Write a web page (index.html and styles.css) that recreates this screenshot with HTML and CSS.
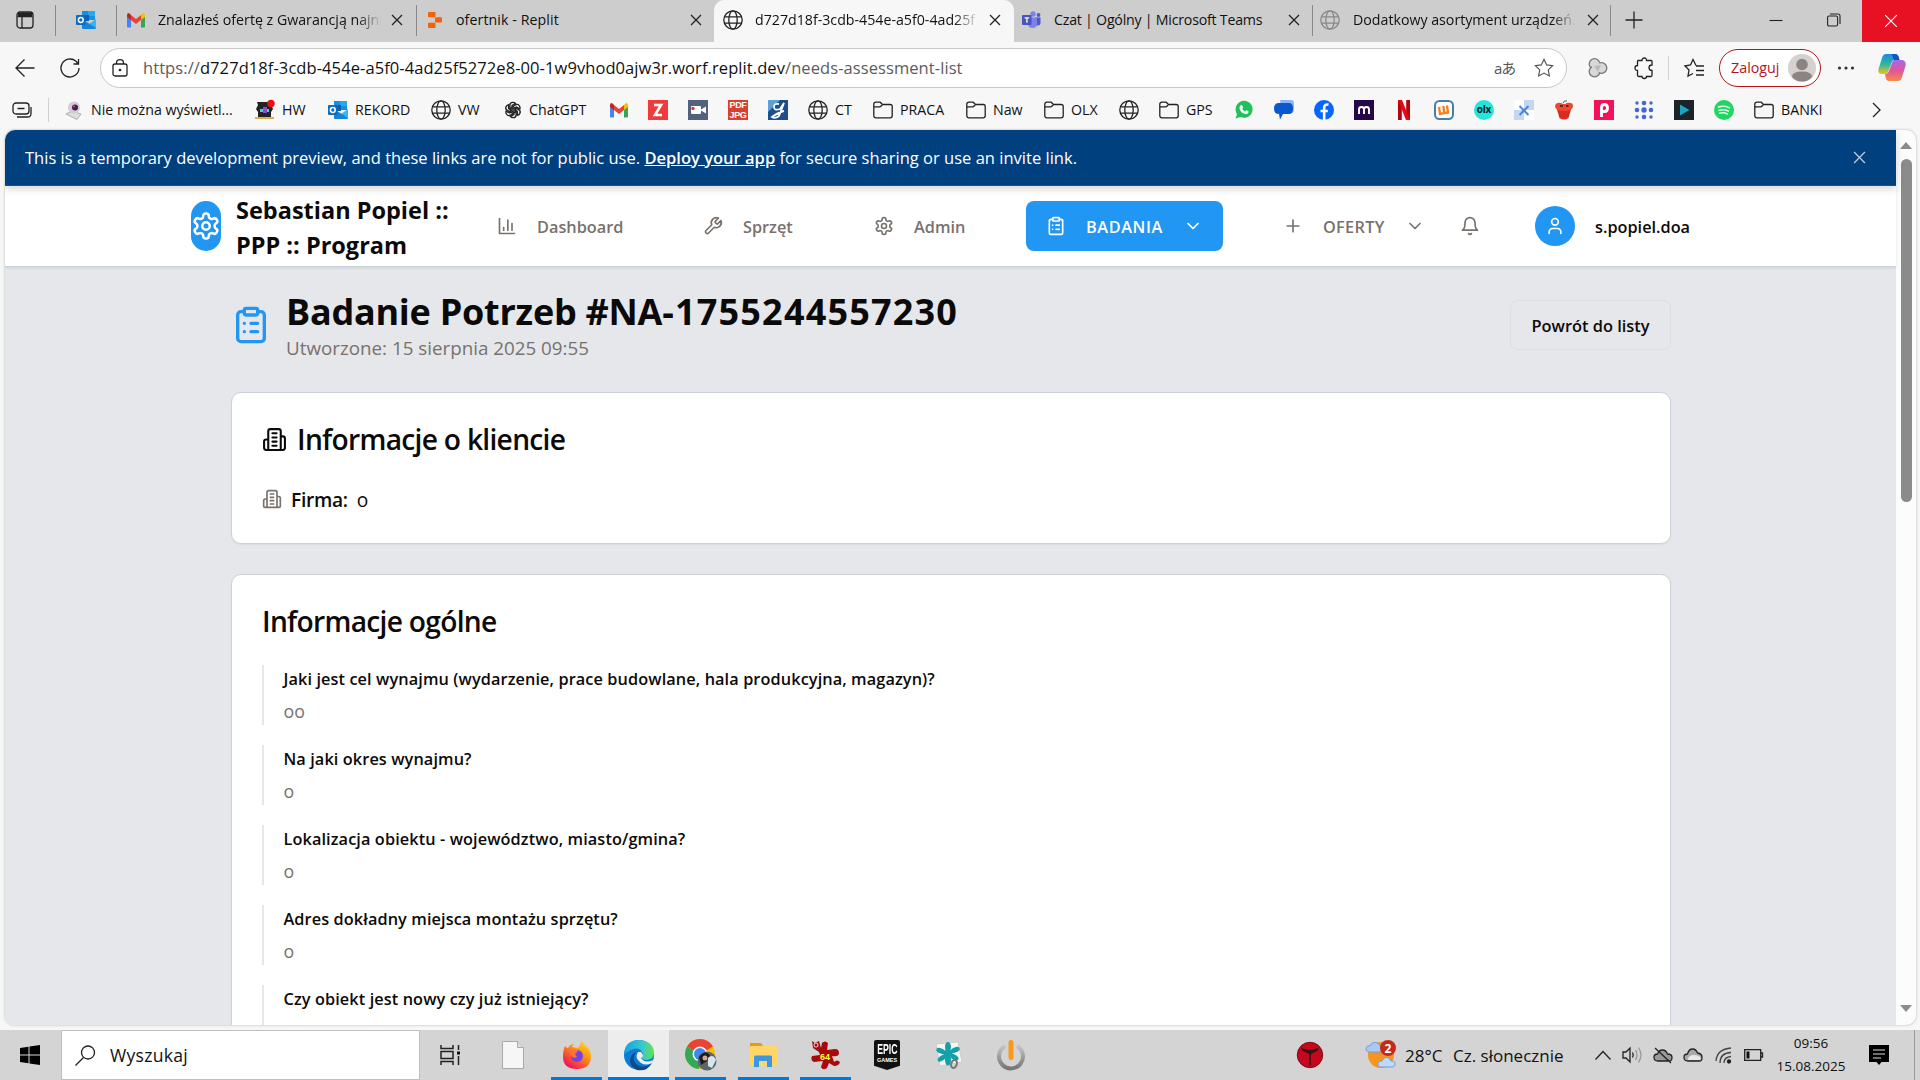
FILE: index.html
```html
<!DOCTYPE html>
<html lang="pl">
<head>
<meta charset="utf-8">
<title>Badanie Potrzeb</title>
<link rel="stylesheet" href="styles.css">
</head>
<body>
<svg class="sprite" xmlns="http://www.w3.org/2000/svg">
  <symbol id="gear" viewBox="0 0 24 24"><path d="M12.22 2h-.44a2 2 0 0 0-2 2v.18a2 2 0 0 1-1 1.73l-.43.25a2 2 0 0 1-2 0l-.15-.08a2 2 0 0 0-2.73.73l-.22.38a2 2 0 0 0 .73 2.73l.15.1a2 2 0 0 1 1 1.72v.51a2 2 0 0 1-1 1.74l-.15.09a2 2 0 0 0-.73 2.73l.22.38a2 2 0 0 0 2.73.73l.15-.08a2 2 0 0 1 2 0l.43.25a2 2 0 0 1 1 1.73V20a2 2 0 0 0 2 2h.44a2 2 0 0 0 2-2v-.18a2 2 0 0 1 1-1.73l.43-.25a2 2 0 0 1 2 0l.15.08a2 2 0 0 0 2.73-.73l.22-.39a2 2 0 0 0-.73-2.73l-.15-.08a2 2 0 0 1-1-1.74v-.5a2 2 0 0 1 1-1.74l.15-.09a2 2 0 0 0 .73-2.73l-.22-.38a2 2 0 0 0-2.73-.73l-.15.08a2 2 0 0 1-2 0l-.43-.25a2 2 0 0 1-1-1.73V4a2 2 0 0 0-2-2z"/><circle cx="12" cy="12" r="3"/></symbol>
  <symbol id="clipboard" viewBox="0 0 24 24"><rect x="8" y="2" width="8" height="4" rx="1"/><path d="M16 4h2a2 2 0 0 1 2 2v14a2 2 0 0 1-2 2H6a2 2 0 0 1-2-2V6a2 2 0 0 1 2-2h2M12 11h4M12 16h4M8 11h.01M8 16h.01"/></symbol>
  <symbol id="building" viewBox="0 0 24 24"><path d="M6 22V4a2 2 0 0 1 2-2h8a2 2 0 0 1 2 2v18ZM6 12H4a2 2 0 0 0-2 2v6a2 2 0 0 0 2 2h2M18 9h2a2 2 0 0 1 2 2v9a2 2 0 0 1-2 2h-2M10 6h4M10 10h4M10 14h4M10 18h4"/></symbol>
  <symbol id="chevron" viewBox="0 0 24 24"><path d="m6 9 6 6 6-6"/></symbol>
  <symbol id="globe" viewBox="0 0 20 20"><circle cx="10" cy="10" r="9.2"/><ellipse cx="10" cy="10" rx="4.2" ry="9.2"/><path d="M1.5 6.8h17M1.5 13.2h17"/></symbol>
  <symbol id="folder" viewBox="0 0 20 20"><path d="M.8 4.2a2 2 0 0 1 2-2h4.4l2.3 2.3h7.7a2 2 0 0 1 2 2v9.3a2 2 0 0 1-2 2H2.8a2 2 0 0 1-2-2zM.8 6.8h5.7q1 0 1.6-.8l1.4-1.5"/></symbol>
  <symbol id="x" viewBox="0 0 12 12"><path d="m1 1 10 10M11 1 1 11"/></symbol>
  <symbol id="outlook" viewBox="0 0 20 20"><path fill="#1490df" d="M6 1h13v9H6z"/><path fill="#28a8ea" d="M12 1h7v5h-7z"/><path fill="#0a5fb4" d="M6 5h7v6H6z"/><path fill="#35b8f1" d="m20 9-7 5v5h6q1 0 1-1z"/><path fill="#1784d8" d="m6 9 14 9-1 1H7q-1 0-1-1z"/><rect y="5" width="9.5" height="10" rx="1" fill="#0f6cbd"/><circle cx="4.8" cy="10" r="2.4" fill="none" stroke="#fff" stroke-width="1.5"/></symbol>
  <symbol id="gmail" viewBox="0 0 20 16"><path fill="#4285f4" d="M1 4v10.5q0 1 1 1h3V7z"/><path fill="#34a853" d="M19 4v10.5q0 1-1 1h-3V7z"/><path fill="#ea4335" d="m5 3 5 4 5-4v5l-5 4-5-4z"/><path fill="#c5221f" d="M1 3q0-2 2-2l2 2v5L1 5z"/><path fill="#fbbc04" d="M19 3q0-2-2-2l-2 2v5l4-3z"/></symbol>
</svg>

<header class="tabs">
  <svg class="ln" width="18" height="18" viewBox="0 0 18 18"><rect x="1" y="1" width="16" height="16" rx="3"/><path d="M1.5 5.5h15M6 5v12"/><path d="M2 3.5h14" stroke-width="4"/></svg>
  <i class="sep"></i>
  <svg width="20" height="20"><use href="#outlook"/></svg>
  <i class="sep"></i>
  <svg width="20" height="16"><use href="#gmail"/></svg>
  <span class="tab-t fade">Znalazłeś ofertę z Gwarancją najni</span>
  <svg class="ln x" width="12" height="12"><use href="#x"/></svg>
  <i class="sep"></i>
  <svg width="14" height="16" viewBox="0 0 14 16"><g fill="#f26207"><rect width="7.5" height="5.3" rx="1"/><rect x="7" y="5.3" width="7" height="5.3" rx="1"/><rect y="10.7" width="7.5" height="5.3" rx="1"/></g></svg>
  <span class="tab-t">ofertnik - Replit</span>
  <svg class="ln x" width="12" height="12"><use href="#x"/></svg>
  <div class="active">
    <svg class="ln g" width="20" height="20"><use href="#globe"/></svg>
    <span class="tab-t fade">d727d18f-3cdb-454e-a5f0-4ad25f</span>
    <svg class="ln x" width="12" height="12"><use href="#x"/></svg>
  </div>
  <svg width="19" height="18" viewBox="0 0 19 18"><circle cx="11" cy="3" r="2.7" fill="#7b83eb"/><circle cx="16.5" cy="4" r="1.9" fill="#5059c9"/><path fill="#5059c9" d="M13 6.5h5.5V12q0 2.5-3 2.5H13z"/><path fill="#7b83eb" d="M6 6.5h9v6q0 4.5-4.5 4.5T6 12.5z"/><rect y="4" width="9.5" height="10" rx="1" fill="#4b53bc"/><path d="M2.6 6.8h4.6M4.9 6.8v5" stroke="#fff" stroke-width="1.3"/></svg>
  <span class="tab-t teams">Czat | Ogólny | Microsoft Teams</span>
  <svg class="ln x" width="12" height="12"><use href="#x"/></svg>
  <i class="sep"></i>
  <svg class="ln g pale" width="20" height="20"><use href="#globe"/></svg>
  <span class="tab-t fade">Dodatkowy asortyment urządzeń.</span>
  <svg class="ln x" width="12" height="12"><use href="#x"/></svg>
  <i class="sep"></i>
  <svg class="ln" width="18" height="18" viewBox="0 0 18 18"><path d="M9 .5v17M.5 9h17"/></svg>
  <svg class="ln thin" width="14" height="14" viewBox="0 0 14 14"><path d="M.5 7.5h13"/></svg>
  <svg class="ln thin" width="14" height="14" viewBox="0 0 14 14"><rect x=".6" y="3" width="10" height="10" rx="1.5"/><path d="M3 1h8q2 0 2 2v8"/></svg>
  <div class="close"><svg class="ln thin" width="14" height="14" viewBox="0 0 12 12"><use href="#x"/></svg></div>
</header>

<div class="toolbar">
  <svg class="ln" width="20" height="20" viewBox="0 0 20 20"><path d="M19.5 10H1M9.5 1.5 1 10l8.5 8.5"/></svg>
  <svg class="ln" width="20" height="20" viewBox="0 0 20 20"><path d="M19 10a9 9 0 1 1-3-6.7L18.5 6M18.5 1v5h-5"/></svg>
  <div class="url">
    <svg class="ln" width="16" height="18" viewBox="0 0 16 18"><rect x="1" y="5" width="14" height="12" rx="2"/><path d="M4.5 5V4q0-3.300 3.500-3.300T11.500 4v1"/><circle cx="8" cy="11" r=".7" fill="#333"/></svg>
    <span class="addr"><em>https://</em>d727d18f-3cdb-454e-a5f0-4ad25f5272e8-00-1w9vhod0ajw3r.worf.replit.dev<em>/needs-assessment-list</em></span>
    <span class="lang">aあ</span>
    <svg class="ln soft" width="20" height="20" viewBox="0 0 22 22"><path d="m11 1.500 2.900 6.100 6.600.9-4.800 4.600 1.200 6.700L11 16.600l-5.900 3.200 1.200-6.700L1.500 8.500l6.600-.9z"/></svg>
  </div>
  <svg class="ln" width="20" height="20" viewBox="0 0 20 20"><g fill="#d8d8d8" stroke="#777"><circle cx="6.5" cy="6" r="5.3"/><circle cx="6.5" cy="13.5" r="5.3"/><circle cx="13.5" cy="10" r="5.3"/></g><path fill="#d8d8d8" stroke="none" d="M4 4h7l2 6-3 6H4z"/><path fill="#bbb" stroke="none" d="m6 8 7-1-3 7z"/></svg>
  <svg class="ln" width="20" height="22" viewBox="0 0 20 22"><path d="M4 3.500h4Q8 1 10.300 1T12.500 3.500H17q1 0 1 1V8q-3 0-3 2.700T18 13.500v4.500q0 1.500-1 1.500h-4.500q0 2-2.200 2T8 19.500H5q-1.500 0-1.500-1.500v-4.500Q1 13.500 1 11t2.500-2.500V4.500z"/></svg>
  <i class="sep lt"></i>
  <svg class="ln" width="20" height="20" viewBox="0 0 20 20"><path d="M12 7.500 9 1.500 6.500 7 1 8l4 4-1 6 5-2.500M12 8h8M12 12.500h8M12 17h8"/></svg>
  <div class="login"><span>Zaloguj</span><svg width="28" height="28" viewBox="0 0 28 28"><circle cx="14" cy="14" r="14" fill="#d4d1ce"/><circle cx="14" cy="10.5" r="5.8" fill="#8a8583"/><path fill="#8a8583" d="M4 23q0-5.500 10-5.500T24 23q-4 4.500-10 4.500T4 23"/></svg></div>
  <svg width="18" height="4" viewBox="0 0 18 4"><g fill="#333"><circle cx="2.5" cy="2" r="1.6"/><circle cx="9" cy="2" r="1.6"/><circle cx="15.5" cy="2" r="1.6"/></g></svg>
  <svg width="28" height="27" viewBox="0 0 28 27"><defs><linearGradient id="cp1" x2="0" y2="1"><stop stop-color="#1e8ae0"/><stop offset=".5" stop-color="#2cb5a0"/><stop offset="1" stop-color="#f2c518"/></linearGradient><linearGradient id="cp2" x2="0" y2="1"><stop stop-color="#a06be8"/><stop offset=".5" stop-color="#e0559b"/><stop offset="1" stop-color="#f98b45"/></linearGradient></defs><path fill="url(#cp1)" d="M8 0h9q3 0 4 4l.5 2h-5q-2 0-3 3l-3 8q-1 3-3.500 3H3.500Q-.5 20 .5 15L4 4q1-4 4-4"/><path fill="#1a4fc4" d="M14 0h3q3 0 4 4l.5 3H17q-2-1-3-7"/><path fill="url(#cp2)" d="M20 27h-9q-3 0-3.500-4L7 20q3 0 4-3l3-8q1-3 3.500-3h7q4 1 3 6l-3.500 11q-1 4-4 4"/></svg>
</div>

<nav class="marks">
  <svg class="ln" width="20" height="18" viewBox="0 0 20 18"><rect x="1" y="2" width="16" height="11" rx="3"/><path d="M5.500 7.500h7M5 16h10.500q3.500 0 3.500-3.500V6"/></svg>
  <i class="sep lt"></i>
  <span><svg width="20" height="20" viewBox="0 0 20 20"><path fill="#ddd" stroke="#888" stroke-width=".6" d="m2 14 6-3 9 3-4 5.500z"/><circle cx="10" cy="7.500" r="6" fill="#d3cbd6"/><circle cx="11" cy="7.500" r="3" fill="#3c2242"/><circle cx="10" cy="6.500" r="1" fill="#e040c0"/></svg><b>Nie można wyświetl...</b></span>
  <span><svg width="20" height="20" viewBox="0 0 20 20"><path fill="#222" d="M2 2h14v3l2 4-2 3v5H3v-5L1 9l2-4z"/><path fill="#3ad0e8" d="M5 9h9v3H5z"/><path fill="#8b49d8" d="M8 7h4v6H8z"/><path fill="#d8b050" d="M0 17h19v2H0z"/><circle cx="16" cy="3.500" r="3.700" fill="#f00d0d"/></svg><b>HW</b></span>
  <span><svg width="20" height="20"><use href="#outlook"/></svg><b>REKORD</b></span>
  <span><svg class="ln" width="20" height="20"><use href="#globe"/></svg><b>VW</b></span>
  <span><svg class="ln gpt" width="18" height="18" viewBox="0 0 20 20"><path id="pt" d="M10 6.500 6.500 8.500V4.800Q6.500 1.500 9.800 1.500q2 0 3 1.300L9 5v5"/><use href="#pt" transform="rotate(60 10 10)"/><use href="#pt" transform="rotate(120 10 10)"/><use href="#pt" transform="rotate(180 10 10)"/><use href="#pt" transform="rotate(240 10 10)"/><use href="#pt" transform="rotate(300 10 10)"/></svg><b>ChatGPT</b></span>
  <svg width="20" height="16"><use href="#gmail"/></svg>
  <svg width="20" height="20" viewBox="0 0 20 20"><rect width="20" height="20" fill="#ef3b3b"/><path d="M6 5h7L7 15h7" fill="none" stroke="#fff" stroke-width="2.600"/></svg>
  <svg width="20" height="20" viewBox="0 0 20 20"><rect width="20" height="20" fill="#53627c"/><rect x="3" y="6" width="10" height="8" rx="1" fill="#fff"/><path fill="#fff" d="m13 9.500 5-3v7l-5-3z"/><circle cx="5" cy="8.500" r="1.700" fill="#e33"/></svg>
  <div class="pdf"><span>PDF</span><span>JPG</span></div>
  <svg width="20" height="20" viewBox="0 0 20 20"><rect width="20" height="20" fill="#1d4f8a"/><path fill="#5da0d8" d="M0 0h12L0 12z"/><path d="M11 4Q6 3 6 7t6 2l4-6-5 13q-4 3-7 1 7-5 12-6" fill="none" stroke="#fff" stroke-width="1.800"/></svg>
  <span><svg class="ln" width="20" height="20"><use href="#globe"/></svg><b>CT</b></span>
  <span><svg class="ln" width="20" height="20"><use href="#folder"/></svg><b>PRACA</b></span>
  <span><svg class="ln" width="20" height="20"><use href="#folder"/></svg><b>Naw</b></span>
  <span><svg class="ln" width="20" height="20"><use href="#folder"/></svg><b>OLX</b></span>
  <svg class="ln" width="20" height="20"><use href="#globe"/></svg>
  <span><svg class="ln" width="20" height="20"><use href="#folder"/></svg><b>GPS</b></span>
  <svg width="20" height="20" viewBox="0 0 20 20"><path fill="#1fc15c" d="M1.500 18.500 3 14A8.500 8.500 0 1 1 6.500 17z"/><path fill="#fff" d="M6.500 5.500q1.500-1 2 .5l.6 1.500-.8 1.200q1 2 3 2.800l1-1.200 2.200 1q.5 2.500-2.500 2.700-5-.5-6.500-5.500-.2-2 1-3"/></svg>
  <svg width="20" height="20" viewBox="0 0 20 20"><path fill="#8ab4f8" d="M6 0h11q3 0 3 3v6q0 4-3 4H8z"/><path fill="#0b57d0" d="M5 3h10q4 0 4 5.500T15 14H9l-3 5.500L5 14Q0 14 0 8.500T5 3"/></svg>
  <svg width="20" height="20" viewBox="0 0 20 20"><circle cx="10" cy="10" r="10" fill="#0866ff"/><path fill="none" stroke="#fff" stroke-width="2.600" d="M14.500 4.600q-4.300-.8-4.300 3V20M6.500 11h7.300"/></svg>
  <svg width="20" height="20" viewBox="0 0 20 20"><rect width="20" height="20" fill="#25084a"/><path d="M5 14V9.500q0-2.500 2.500-2.500T10 9.500V14M10 9.500Q10 7 12.500 7T15 9.500V14" fill="none" stroke="#fff" stroke-width="1.900"/></svg>
  <svg width="20" height="20" viewBox="0 0 20 20"><path fill="#b1060f" d="M4 0h3.800v20H4zM12.200 0H16v20h-3.800z"/><path fill="#e50914" d="M4 0h4l8 20h-4z"/></svg>
  <svg width="20" height="20" viewBox="0 0 20 20"><rect x="1" y="1" width="18" height="18" rx="4.500" fill="#fff" stroke="#457fa8" stroke-width="2"/><path d="m5 7 1 7 8-1.500-1-7M9.300 6l1 7" fill="none" stroke="#f57e20" stroke-width="2.300"/></svg>
  <div class="olx">olx</div>
  <svg width="20" height="20" viewBox="0 0 20 20"><rect width="20" height="20" fill="#fff"/><path fill="#c3d7f2" d="M10 0h10v10H10zM0 10h10v10H0z"/><path d="m5.500 6 9 9M14.500 6l-9 9" stroke="#4b87d9" stroke-width="2"/></svg>
  <svg width="20" height="20" viewBox="0 0 20 20"><path fill="#d92c20" d="M2.500 8h15l-3 10q-4.500 3-9 0z"/><path fill="#ee4632" d="M10 11Q1 11 1 6q1-4 6-3 3 2 6 0 6-1 6 3 0 5-9 5"/><path fill="#5b2b1a" d="M6 5h3v2H6zM12 5h2.500v2H12z"/><path d="M9 3q1-3 4-2" stroke="#555" fill="none"/></svg>
  <svg width="20" height="20" viewBox="0 0 20 20"><rect width="20" height="20" fill="#f5105a"/><path d="M7.500 17V7.500Q7.500 4.500 10.500 4.500t3 3.500-3 3.500H8" fill="none" stroke="#fff" stroke-width="2.900"/></svg>
  <svg width="20" height="20" viewBox="0 0 20 20"><g fill="#4568d0"><circle cx="3" cy="3" r="1.700"/><circle cx="10" cy="3" r="2.300"/><circle cx="17" cy="3" r="1.700"/><circle cx="3" cy="10" r="2.300"/><circle cx="10" cy="10" r="2.700"/><circle cx="17" cy="10" r="2.300"/><circle cx="3" cy="17" r="1.700"/><circle cx="10" cy="17" r="2.300"/><circle cx="17" cy="17" r="1.700"/></g></svg>
  <svg width="20" height="20" viewBox="0 0 20 20"><rect width="20" height="20" fill="#1b2429"/><path fill="#1aa5c4" d="M6 4.500 15.500 10 6 15.500z"/></svg>
  <svg width="20" height="20" viewBox="0 0 20 20"><circle cx="10" cy="10" r="10" fill="#1ed760"/><path d="M4.500 7q6-1.800 11 .8M5 10.300q5-1.500 9.500.8M5.500 13.300q4-1.200 8 .6" fill="none" stroke="#e6fbee" stroke-width="1.600" stroke-linecap="round"/></svg>
  <span><svg class="ln" width="20" height="20"><use href="#folder"/></svg><b>BANKI</b></span>
  <svg class="ln" width="9" height="16" viewBox="0 0 9 16"><path d="m1 1 7 7-7 7"/></svg>
</nav>

<main class="frame">
  <div class="page">
    <div class="banner">
      <span>This is a temporary development preview, and these links are not for public use. <a>Deploy your app</a> for secure sharing or use an invite link.</span>
      <svg class="ln" width="13" height="13" viewBox="0 0 12 12"><use href="#x"/></svg>
    </div>
    <div class="topnav">
      <div class="logo"><svg class="lc" width="30" height="30"><use href="#gear"/></svg></div>
      <div class="brand">Sebastian Popiel ::<br>PPP :: Program</div>
      <div class="item"><svg class="lc" width="20" height="20" viewBox="0 0 24 24"><path d="M3 3v18h18M18 17V9M13 17V5M8 17v-3"/></svg><span>Dashboard</span></div>
      <div class="item"><svg class="lc" width="20" height="20" viewBox="0 0 24 24"><path d="M14.7 6.3a1 1 0 0 0 0 1.400l1.600 1.600a1 1 0 0 0 1.400 0l3.770-3.770a6 6 0 0 1-7.940 7.940l-6.910 6.910a2.120 2.120 0 0 1-3-3l6.910-6.910a6 6 0 0 1 7.940-7.940l-3.760 3.760z"/></svg><span>Sprzęt</span></div>
      <div class="item"><svg class="lc" width="20" height="20"><use href="#gear"/></svg><span>Admin</span></div>
      <div class="badania"><svg class="lc" width="20" height="20"><use href="#clipboard"/></svg><span>BADANIA</span><svg class="lc" width="20" height="20"><use href="#chevron"/></svg></div>
      <div class="item oferty"><svg class="lc" width="20" height="20" viewBox="0 0 24 24"><path d="M5 12h14M12 5v14"/></svg><span>OFERTY</span><svg class="lc" width="20" height="20"><use href="#chevron"/></svg></div>
      <div class="item"><svg class="lc" width="20" height="20" viewBox="0 0 24 24"><path d="M6 8a6 6 0 0 1 12 0c0 7 3 9 3 9H3s3-2 3-9M10.300 21a1.940 1.940 0 0 0 3.400 0"/></svg></div>
      <div class="user"><i><svg class="lc" width="20" height="20" viewBox="0 0 24 24"><path d="M19 21v-2a4 4 0 0 0-4-4H9a4 4 0 0 0-4 4v2"/><circle cx="12" cy="7" r="4"/></svg></i><span>s.popiel.doa</span></div>
    </div>
    <div class="content">
      <div class="head">
        <svg class="lc" width="40" height="40"><use href="#clipboard"/></svg>
        <div class="titles"><h1>Badanie Potrzeb #NA<span>-1755244557230</span></h1><p>Utworzone: 15 sierpnia 2025 09:55</p></div>
        <button class="back">Powrót do listy</button>
      </div>
      <section class="card">
        <h2><svg class="lc" width="25" height="25"><use href="#building"/></svg>Informacje o kliencie</h2>
        <div class="firm"><svg class="lc" width="20" height="20"><use href="#building"/></svg><b>Firma:</b><span>o</span></div>
      </section>
      <section class="card second">
        <h2>Informacje ogólne</h2>
        <div class="qa"><b>Jaki jest cel wynajmu (wydarzenie, prace budowlane, hala produkcyjna, magazyn)?</b><p>oo</p></div>
        <div class="qa"><b>Na jaki okres wynajmu?</b><p>o</p></div>
        <div class="qa"><b>Lokalizacja obiektu - województwo, miasto/gmina?</b><p>o</p></div>
        <div class="qa"><b>Adres dokładny miejsca montażu sprzętu?</b><p>o</p></div>
        <div class="qa"><b>Czy obiekt jest nowy czy już istniejący?</b></div>
      </section>
    </div>
  </div>
  <div class="scroll"><i class="up"></i><i class="thumb"></i><i class="down"></i></div>
</main>

<footer class="taskbar">
  <div class="start"><svg width="20" height="20" viewBox="0 0 20 20"><path d="M0 3l8.500-1.200v7.700H0zM9.500 1.600 20 0v9.500H9.500zM0 10.500h8.500v7.700L0 17zM9.500 10.500H20V20L9.500 18.400z"/></svg></div>
  <div class="search"><svg class="ln" width="21" height="21" viewBox="0 0 21 21"><circle cx="13" cy="7.500" r="6.500"/><path d="M8.500 12.500.5 20.500"/></svg><span>Wyszukaj</span></div>
  <div class="app"><svg class="ln sq" width="20" height="20" viewBox="0 0 20 20"><path d="M1 0v3.500h12V0M1 20v-3.500h12V20M1 6.500h12v7H1zM18.500 0v5M18.500 11v9"/><path d="M17 6.500h3v3h-3z" fill="#111" stroke="none"/></svg></div>
  <div class="app"><svg width="22" height="28" viewBox="0 0 22 28"><path fill="#f6f6f6" stroke="#aaa" d="M.5.5h15l6 6v21H.5z"/><path fill="#ddd" stroke="#aaa" d="M15.500.5v6h6"/></svg></div>
  <div class="app on"><svg width="30" height="30" viewBox="0 0 30 30"><defs><linearGradient id="ff" x1="1" x2=".3" y2="1"><stop stop-color="#fff44f"/><stop offset=".45" stop-color="#ff980e"/><stop offset="1" stop-color="#f0145a"/></linearGradient></defs><path fill="url(#ff)" d="M3 6q1 2 3 2 2-4 6-4l-2 3 6 1q3-3 3-8 4 3 5 7l1-1q4 5 4 10 0 13-14 13Q1 29 1 17 1 10 3 6"/><circle cx="15" cy="16" r="6" fill="#7542e5"/><path fill="#ff7139" d="M7 11q6-3 9 0l-3 3 2 3q-3 2-6-1z"/></svg></div>
  <div class="app on edge"><svg width="30" height="30" viewBox="0 0 30 30"><defs><linearGradient id="eg"><stop stop-color="#1aa0e0"/><stop offset=".6" stop-color="#36c8d0"/><stop offset="1" stop-color="#66e24a"/></linearGradient></defs><circle cx="15" cy="15" r="15" fill="#0c7bd4"/><path fill="url(#eg)" d="M0 14Q1 0 15 0q14 1 15 12 0 7-7 8-6 0-5-3 2-3 0-5Q14 4 0 14"/><path fill="#114a8b" d="M12 12q-6 10 4 14 6 2 12-3-5 9-15 7-7-3-7-10 1-6 6-8"/><path fill="#ededed" d="M17 12q4 4 0 6 4 6 12 2l-1 3q-6 3-11 0-7-5-3-11z"/></svg></div>
  <div class="app on"><svg width="32" height="32" viewBox="0 0 32 32"><circle cx="15" cy="15" r="15" fill="#fbbc05"/><path fill="#ea4335" d="M15 15 2 7.500a15 15 0 0 1 26 0z"/><path fill="#34a853" d="M15 15 2 7.500Q-2 15 2 22.500 7 30 14 30z"/><circle cx="15" cy="15" r="7.500" fill="#fff"/><circle cx="15" cy="15" r="6" fill="#4285f4"/><circle cx="22" cy="22" r="9.500" fill="#5c6670"/><path fill="#1e1b1c" d="M14 18q6-8 11-2l-3 6-6 4z"/><path fill="#d6e6ec" d="M23 19q5-5 8 2l-4 8-4-2z"/><circle cx="20" cy="19" r="2.500" fill="#d9a791"/></svg></div>
  <div class="app on"><svg width="28" height="24" viewBox="0 0 28 24"><path fill="#e59b16" d="M1 0h11l2 3v3H1z"/><rect x="1" y="3" width="27" height="20" rx="1" fill="#ffd667"/><path fill="#3d97e0" d="M5 24V14q0-1.500 1.500-1.500h15q1.500 0 1.500 1.500v10h-5v-6h-8v6z"/></svg></div>
  <div class="app on"><svg width="30" height="30" viewBox="0 0 30 30"><path fill="#a8090c" d="m2 1 3 2 4-2 2 7 1-5q3-3 6 0l-1 7 8-1q4 0 4 4t-7 3l2 6q3-3 6 0-1 4-6 4l-5-3-2 5q-4 3-6-1l2-6-9 1q-4-2-2-6l8-1-1-3-6-4z"/><circle cx="6" cy="5" r="2.500" fill="#e9c4c4"/><circle cx="6" cy="5" r="1.500" fill="#a8090c"/><text x="15" y="20" class="i64">64</text></svg></div>
  <div class="app"><div class="epic"><b>EPIC</b><span>GAMES</span></div></div>
  <div class="app"><svg width="28" height="28" viewBox="0 0 28 28"><path fill="#f5f5f5" stroke="#ccc" d="m1 3 22-2 4 20-22 4z"/><g fill="#14a0a8"><ellipse cx="13" cy="6" rx="3" ry="5"/><ellipse cx="13" cy="19" rx="3" ry="5.500"/><ellipse cx="6" cy="10" rx="5" ry="2.600" transform="rotate(25 6 10)"/><ellipse cx="20" cy="9" rx="5" ry="2.600" transform="rotate(-25 20 9)"/><ellipse cx="7" cy="17" rx="5" ry="2.500" transform="rotate(-35 7 17)"/><ellipse cx="19" cy="16" rx="5" ry="2.500" transform="rotate(30 19 16)"/><circle cx="13" cy="12.500" r="4"/></g><ellipse cx="19" cy="23" rx="2.800" ry="4" fill="none" stroke="#777" stroke-width="2" transform="rotate(20 19 23)"/></svg></div>
  <div class="app"><svg width="28" height="30" viewBox="0 0 28 30"><defs><linearGradient id="pw" x2="0" y2="1"><stop stop-color="#c4c4c4"/><stop offset="1" stop-color="#777"/></linearGradient></defs><path d="M8 6a12 12 0 1 0 12 0" fill="none" stroke="url(#pw)" stroke-width="4"/><rect x="11.500" width="5" height="20" rx="2.500" fill="#f59a1c"/></svg></div>
  <div class="tray">
    <svg width="26" height="26" viewBox="0 0 26 26"><circle cx="13" cy="13" r="12.700" fill="#c4091f" stroke="#7c0b15"/><path fill="#3a1013" d="M4 6q9 3.500 18 0-1 3-4 4l-4 2-.5 12h-1L12 12l-4-2Q5 9 4 6"/></svg>
    <svg width="32" height="30" viewBox="0 0 32 30"><circle cx="16" cy="15" r="13" fill="#f7941d"/><path fill="#a9c8f5" stroke="#6f9ee0" d="M4 12q-4-1-3-4 1-3 4-2 2-5 7-3 3 1 3 3 4 1 2 5-1 1-2 1z"/><path fill="#c0d8fa" stroke="#6f9ee0" d="M15 27q-3-1-2-4 1-2 4-2 2-5 7-3l2 3q5 0 4 4-1 2-3 2z"/><circle cx="23" cy="8" r="8" fill="#c42b1c"/><text x="23" y="12.500" class="badge">2</text></svg>
    <span class="wt">28°C</span>
    <span class="wt">Cz. słonecznie</span>
    <svg class="ln" width="16" height="9" viewBox="0 0 16 9"><path d="m.5 8.500 7.500-8 7.500 8"/></svg>
    <svg class="ln" width="21" height="18" viewBox="0 0 21 18"><path d="M1 6h3l4-4v14l-4-4H1zM10.500 6.500q1.500 2.500 0 5"/><path d="M13.500 4q3 5 0 10M16.500 1.500q5 7.500 0 15" stroke="#999"/></svg>
    <svg class="ln" width="20" height="17" viewBox="0 0 20 17"><path fill="#999" d="M5 14Q1 14 1 10.500T4.500 7Q6 3 9.500 3t5 4Q19 7 19 10.500T16 14zM2 1l16 15"/></svg>
    <svg class="ln" width="20" height="14" viewBox="0 0 20 14"><path fill="#aaa" d="M5 13Q1 13 1 9.500T4.500 6Q6 1 9.500 1t5 4Q19 5.500 19 9.500T16 13z"/><path fill="#e8e8e8" stroke="none" d="M5 12q0-5 6-5t7 4l-2 1z"/></svg>
    <svg class="ln" width="17" height="17" viewBox="0 0 17 17"><path d="M1 14Q2 2 16 1M5 16Q5 6 16 5.500M9 16q0-6 7-6.500" stroke="#444"/><circle cx="14" cy="14.500" r="1.500" fill="#111"/></svg>
    <svg class="ln" width="19" height="12" viewBox="0 0 19 12"><path d="M.7.7h16v10.600H.7zM16.700 4h1.800v4h-1.800"/><path fill="#111" stroke="none" d="M2.500 2.500h3v7h-3z"/></svg>
    <div class="clock"><span>09:56</span><span>15.08.2025</span></div>
    <svg width="20" height="20" viewBox="0 0 20 20"><path d="M0 0h20v17h-7.500L10 20l-2.500-3H0z"/><path d="M4 5h12M4 9h12M4 13h8" stroke="#ddd"/></svg>
  </div>
</footer>
</body>
</html>
```
FILE: styles.css
```css
* { box-sizing: border-box; }
body { margin: 0; width: 1920px; height: 1080px; overflow: hidden; background: #f7f7f7; color: #111; font-family: "Open Sans", "Noto Sans", "Noto Sans CJK JP", sans-serif; display: flex; flex-direction: column; }
svg { flex: none; display: block; overflow: visible; }
h1, h2, p { margin: 0; }
.sprite { position: absolute; width: 0; height: 0; }
.ln { fill: none; stroke: #222; stroke-width: 1.3; }
.ln.soft { stroke: #555; }
.lc { fill: none; stroke: currentColor; stroke-width: 2; stroke-linecap: round; stroke-linejoin: round; }
.thin { stroke-width: 1.1; }
.sep { width: 1px; height: 31px; background: #8a8a8a; }
.sep.lt { height: 24px; background: #d0d0d0; }

/* Tab strip */
.tabs { flex: none; height: 42px; background: #cdcdcd; display: grid; align-items: center; padding: 0 0 2px 16px; grid-template-columns: 39px 21px 40px 10px 32px 233px 25px 12px 28px 234px 24px 308px 32px 234px 24px 8px 33px 234px 23px 15px 144px 58px 35px 58px; }
.tab-t { font-size: 14.2px; white-space: nowrap; line-height: 20px; letter-spacing: .08px; }
.tab-t.fade { width: 226px; letter-spacing: 0; -webkit-mask-image: linear-gradient(90deg, #000 88%, transparent 99%); mask-image: linear-gradient(90deg, #000 88%, transparent 99%); }
.tab-t.teams { letter-spacing: -.23px; }
.x { stroke-width: 1.3; }
.ln.pale { stroke: #888; }
.active { width: 300px; height: 42px; margin-bottom: -2px; padding: 0 0 2px 9px; background: #f7f7f7; border-radius: 10px 10px 0 0; display: grid; grid-template-columns: 32px 234px 12px; align-items: center; }
.close { width: 58px; height: 42px; margin-bottom: -2px; background: #e81123; display: grid; place-items: center; }
.close .ln { stroke: #fff; stroke-width: .9; }

/* Address bar */
.toolbar { flex: none; height: 48px; display: grid; align-items: center; padding: 3px 0 0 15px; grid-template-columns: 45px 40px 1488px 46px 34px 16px 35px 118px 41px 28px; }
.url { width: 1467px; height: 40px; border: 1px solid #c8c8c8; border-radius: 20px; background: #fff; display: grid; align-items: center; padding-left: 11px; grid-template-columns: 31px 1351px 40px 22px; }
.addr { font-size: 16.5px; letter-spacing: .08px; white-space: nowrap; }
.addr em { font-style: normal; color: #5c5c5c; }
.lang { font-size: 15px; color: #555; letter-spacing: -1.2px; white-space: nowrap; }
.login { width: 102px; height: 38px; border: 1.5px solid #b5131c; border-radius: 19px; display: flex; align-items: center; justify-content: space-between; padding: 0 4px 0 11px; color: #b5131c; font-size: 14.3px; background: #fff; }

/* Bookmarks */
.marks { flex: none; height: 40px; display: grid; align-items: center; padding-left: 12px; grid-template-columns: 36px 16px 191px 73px 103px 73px 105px 39px 40px 40px 40px 40px 65px 93px 78px 75px 40px 75px repeat(13, 40px) 118px 9px; }
.marks span { display: flex; align-items: center; gap: 7px; }
.marks b { font-weight: 400; font-size: 14.2px; line-height: 18px; padding-bottom: 1px; white-space: nowrap; }
.marks .gpt { stroke-width: 1.5; }
.marks .pdf { width: 20px; height: 20px; background: #d9412f; color: #fff; display: flex; flex-direction: column; align-items: center; }
.pdf span { display: block; font: 700 9px/10px "Liberation Sans", sans-serif; letter-spacing: -.3px; }
.olx { width: 20px; height: 20px; border-radius: 50%; background: #23e5db; color: #022; font: 700 10px/18px "Open Sans", sans-serif; text-align: center; letter-spacing: -.2px; }

/* Page frame */
.frame { flex: none; width: 1911px; height: 895px; margin: 0 0 0 5px; border-radius: 10px; background: #fcfcfc; display: flex; overflow: hidden; box-shadow: 0 0 2px 1px #d8d8d8; }
.page { width: 1891px; background: #e5e7eb; display: flex; flex-direction: column; }
.banner { flex: none; height: 56px; background: #00407f; color: #fff; display: flex; align-items: center; justify-content: space-between; padding: 0 30px 0 20px; font-size: 16.5px; letter-spacing: .012px; box-shadow: 0 3px 8px rgba(0,0,0,.16); position: relative; border-bottom: 1px solid #125195; }
.banner a { font-weight: 600; text-decoration: underline; }
.banner .ln { stroke: #b8cbe0; stroke-width: 1.2; }
.topnav { flex: none; height: 81px; background: #fff; border-bottom: 1px solid #c9d3dd; box-shadow: 0 1px 3px rgba(0,0,0,.1); display: grid; align-items: center; padding-left: 186px; grid-template-columns: 45px 261px 206px 171px 152px 257px 177px 75px 200px; color: #78716c; font-weight: 600; font-size: 16.3px; }
.logo { width: 30px; height: 50px; border-radius: 20px; background: #2196f3; color: #fff; display: grid; place-items: center; }
.brand { font-size: 23.5px; line-height: 35px; padding-top: 3px; font-weight: 700; color: #0c0a09; white-space: nowrap; }
.item { display: flex; align-items: center; gap: 20px; }
.item span, .user span { padding-top: 2px; }
.badania { width: 197px; height: 50px; border-radius: 8px; background: #2196f3; color: #fff; display: flex; align-items: center; padding: 0 20px; }
.badania span { width: 77px; margin: 2px 20px 0; letter-spacing: .6px; }
.oferty span { width: 62px; letter-spacing: .3px; }
.user { display: flex; align-items: center; gap: 20px; color: #0c0a09; }
.user i { width: 40px; height: 40px; border-radius: 50%; background: #2196f3; color: #fff; display: grid; place-items: center; }

.content { width: 1440px; margin: 0 0 0 226px; }
.head { height: 125px; display: flex; align-items: center; }
.head > svg { color: #2196f3; margin-top: -9px; }
.titles { margin: -9px auto 0 15px; }
.titles h1 { font-size: 36px; line-height: 45px; font-weight: 700; letter-spacing: -.25px; color: #0c0a09; }
.titles h1 span { letter-spacing: 1.2px; }
.titles p { font-size: 18.8px; line-height: 28px; color: #78716c; }
.back { width: 161px; height: 50px; margin-top: -9px; padding: 1px 0 0; border: 1px solid #dcdee2; border-radius: 8px; background: transparent; font: 600 16.4px "Open Sans", sans-serif; color: #0c0a09; white-space: nowrap; }
.card { height: 152px; border: 1px solid #cbd2d9; border-radius: 10px; background: #fff; padding: 29px 30px; box-shadow: 0 1px 2px rgba(0,0,0,.05); color: #0c0a09; }
.card.second { height: 600px; margin-top: 30px; }
.card h2 { display: flex; align-items: center; gap: 10px; font-size: 28.2px; line-height: 35px; height: 34px; font-weight: 600; letter-spacing: -.72px; }
.firm { display: flex; align-items: center; gap: 9px; height: 28px; margin-top: 29px; font-size: 19.2px; }
.firm b { font-weight: 600; letter-spacing: -.3px; }
.firm svg { color: #78716c; }
.qa { height: 60px; margin-top: 20px; border-left: 2.5px solid #e5e7eb; padding-left: 19.5px; }
.card h2 + .qa { margin-top: 27px; }
.qa b { display: block; font-weight: 600; font-size: 16.3px; line-height: 27px; padding-top: 1px; letter-spacing: .1px; }
.qa p { font-size: 17.8px; line-height: 25px; margin-top: 6px; color: #78716c; }

.scroll { width: 20px; display: flex; flex-direction: column; align-items: center; padding: 12px 0 13px; }
.up, .down { border: 6.5px solid transparent; border-top: 0; border-bottom: 7px solid #8b8b8b; }
.thumb { width: 11px; height: 343px; border-radius: 6px; background: #8b8b8b; margin: 10px 0 auto; }
.down { border-bottom: 0; border-top: 7px solid #8b8b8b; }

/* Taskbar */
.taskbar { flex: none; height: 50px; margin-top: 5px; background: #d4d4d4; display: grid; grid-template-columns: 61px 359px 60px 65px 63px 61px 63px 62px 62px 62px 62px 62px 1fr; align-items: center; }
.start { padding-left: 20px; }
.search { height: 50px; background: #fff; border: 1px solid #bfbfbf; display: flex; align-items: center; gap: 14px; padding-left: 13px; font-size: 17.6px; letter-spacing: .25px; }
.app { height: 50px; display: grid; place-items: center; }
.on { background: linear-gradient(#0078d7, #0078d7) center bottom / 51px 3px no-repeat; }
.edge { background-color: #ededed; background-size: 61px 3px; }
.sq { stroke-width: 1.5; }
.i64 { font: 700 9px "Liberation Sans", sans-serif; fill: #ff3; text-anchor: middle; }
.epic { width: 26px; height: 30px; background: #111; color: #fff; border-radius: 2px; clip-path: polygon(0 0, 100% 0, 100% 86%, 50% 100%, 0 86%); display: flex; flex-direction: column; align-items: center; padding-top: 2px; font-family: "Liberation Sans", sans-serif; }
.epic b { font-size: 14px; line-height: 15px; transform: scaleX(.62); }
.epic span { font-size: 5.5px; line-height: 6px; font-weight: 700; }
.tray { display: grid; align-items: center; height: 50px; grid-template-columns: 68px 40px 48px 142px 27px 31px 30px 32px 29px 27px 98px 45px; justify-content: end; border-right: 1px solid #999; margin-right: 5px; }
.badge { font: 700 12px "Open Sans", sans-serif; fill: #fff; text-anchor: middle; }
.wt { font-size: 17px; white-space: nowrap; }
.clock { width: 80px; display: flex; flex-direction: column; align-items: center; font-size: 13.5px; line-height: 23px; }
```
